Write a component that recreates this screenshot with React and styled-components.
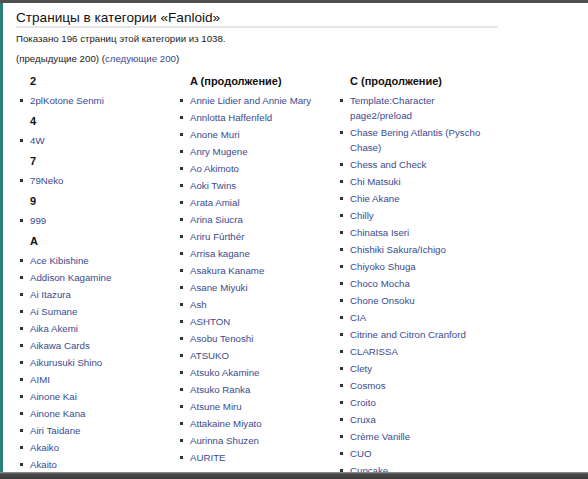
import React from "react";
import styled, { createGlobalStyle } from "styled-components";

const Global = createGlobalStyle`
  html, body { margin: 0; padding: 0; background: #fff; }
  body { font-family: "Liberation Sans", Arial, sans-serif; }
`;

const Frame = styled.div`
  width: 588px;
  height: 479px;
  display: grid;
  grid-template-rows: 3px 1fr 7px;
  overflow: hidden;
  background: #fff;
`;

const TopBar = styled.div`
  background: #505050;
`;

const Middle = styled.div`
  display: flex;
  overflow: hidden;
  min-height: 0;
`;

const SideStrip = styled.div`
  width: 3px;
  flex: none;
  background: #2b7f78;
`;

const BottomBar = styled.div`
  background: linear-gradient(#9a9a9a 0px, #4a4a4a 2px, #3a3a3a 100%);
`;

const Content = styled.div`
  flex: 1;
  padding: 7px 0 0 13px;
  color: #222;
`;

const Title = styled.h1`
  margin: 0;
  width: 482px;
  font-size: 13.6px;
  font-weight: normal;
  line-height: 16px;
  color: #111;
  border-bottom: 2px solid #e6e6e6;
`;

const Para = styled.p`
  margin: 0 0 6px;
  font-size: 9.7px;
  line-height: 14px;
  color: #222;
  &:first-of-type { margin-top: 3.5px; }
`;

const Link = styled.a`
  color: #3b4a8e;
  text-decoration: none;
`;

const Columns = styled.div`
  display: grid;
  grid-template-columns: repeat(3, 160px);
  margin-top: 6.7px;
`;

const Column = styled.div`
  padding-left: 14px;
`;

const Group = styled.div`
  padding-bottom: 2.5px;
`;

const Heading = styled.h3`
  margin: 0 0 2.5px;
  font-size: 11px;
  font-weight: bold;
  line-height: 18px;
  color: #111;
`;

const List = styled.ul`
  margin: 0;
  padding: 0;
  list-style: none;
  width: 146px;
`;

const Item = styled.li`
  position: relative;
  font-size: 9.7px;
  line-height: 15px;
  margin-bottom: 2px;
  &::before {
    content: "";
    position: absolute;
    left: -10px;
    top: 6px;
    width: 3px;
    height: 3px;
    background: #333;
  }
`;

const col1 = [
  { h: "2", items: ["2plKotone Senmi"] },
  { h: "4", items: ["4W"] },
  { h: "7", items: ["79Neko"] },
  { h: "9", items: ["999"] },
  {
    h: "A",
    items: [
      "Ace Kibishine",
      "Addison Kagamine",
      "Ai Itazura",
      "Ai Sumane",
      "Aika Akemi",
      "Aikawa Cards",
      "Aikurusuki Shino",
      "AIMI",
      "Ainone Kai",
      "Ainone Kana",
      "Airi Taidane",
      "Akaiko",
      "Akaito",
    ],
  },
];

const col2 = [
  {
    h: "A (продолжение)",
    items: [
      "Annie Lidier and Annie Mary",
      "Annlotta Haffenfeld",
      "Anone Muri",
      "Anry Mugene",
      "Ao Akimoto",
      "Aoki Twins",
      "Arata Amial",
      "Arina Siucra",
      "Ariru Fúrthér",
      "Arrisa kagane",
      "Asakura Kaname",
      "Asane Miyuki",
      "Ash",
      "ASHTON",
      "Asobu Tenoshi",
      "ATSUKO",
      "Atsuko Akamine",
      "Atsuko Ranka",
      "Atsune Miru",
      "Attakaine Miyato",
      "Aurinna Shuzen",
      "AURITE",
      "Aurora",
    ],
  },
];

const col3 = [
  {
    h: "C (продолжение)",
    items: [
      "Template:Character page2/preload",
      "Chase Bering Atlantis (Pyscho Chase)",
      "Chess and Check",
      "Chi Matsuki",
      "Chie Akane",
      "Chilly",
      "Chinatsa Iseri",
      "Chishiki Sakura/Ichigo",
      "Chiyoko Shuga",
      "Choco Mocha",
      "Chone Onsoku",
      "CIA",
      "Citrine and Citron Cranford",
      "CLARISSA",
      "Clety",
      "Cosmos",
      "Croito",
      "Cruxa",
      "Crème Vanille",
      "CUO",
      "Cupcake",
    ],
  },
];

function Col({ groups }) {
  return (
    <Column>
      {groups.map((g) => (
        <Group key={g.h}>
          <Heading>{g.h}</Heading>
          <List>
            {g.items.map((it) => (
              <Item key={it}>
                <Link href="#">{it}</Link>
              </Item>
            ))}
          </List>
        </Group>
      ))}
    </Column>
  );
}

export default function App() {
  return (
    <>
      <Global />
      <Frame>
        <TopBar />
        <Middle>
          <SideStrip />
          <Content>
            <Title>Страницы в категории «Fanloid»</Title>
            <Para>Показано 196 страниц этой категории из 1038.</Para>
            <Para>
              (предыдущие 200) (<Link href="#">следующие 200</Link>)
            </Para>
            <Columns>
              <Col groups={col1} />
              <Col groups={col2} />
              <Col groups={col3} />
            </Columns>
          </Content>
        </Middle>
        <BottomBar />
      </Frame>
    </>
  );
}
